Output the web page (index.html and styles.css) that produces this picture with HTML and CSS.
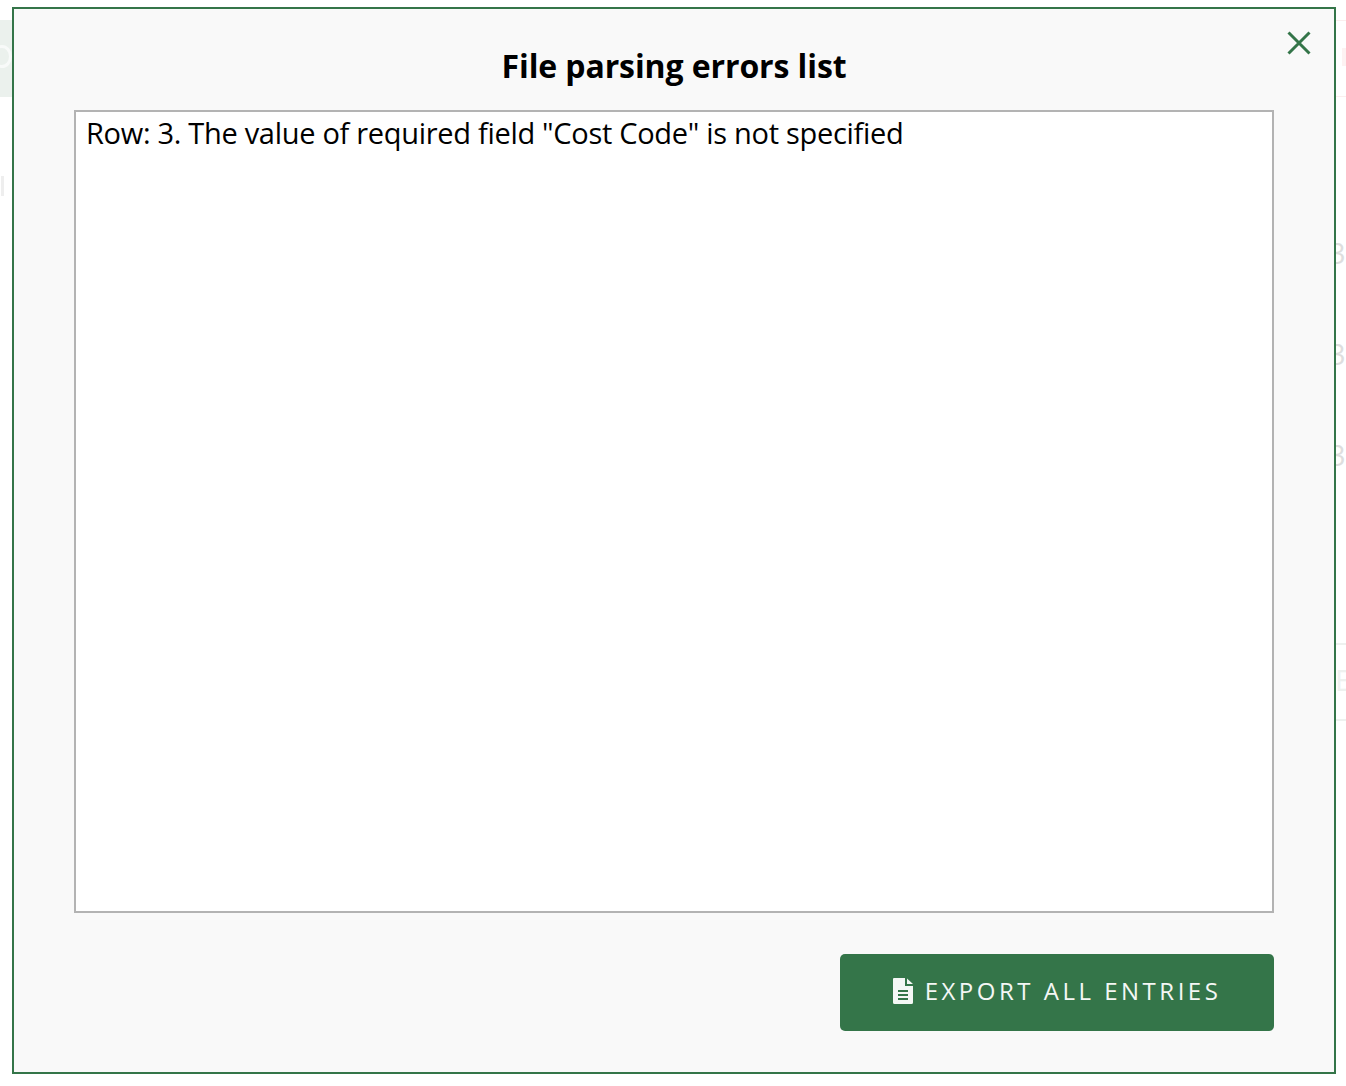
FILE: index.html
```html
<!DOCTYPE html>
<html lang="en">
<head>
<meta charset="utf-8">
<title>File parsing errors list</title>
<link rel="stylesheet" href="styles.css">
</head>
<body>
<div class="backdrop" aria-hidden="true">
  <div class="ghost-chip"></div>
  <div class="ghost-ring"></div>
  <div class="ghost-stem"></div>
  <div class="ghost-pink-line"></div>
  <div class="ghost-pink-bar"></div>
  <span class="ghost-num ghost-3a">3</span>
  <span class="ghost-num ghost-3b">3</span>
  <span class="ghost-num ghost-3c">3</span>
  <div class="ghost-line ghost-l1"></div>
  <span class="ghost-num ghost-e">E</span>
  <div class="ghost-line ghost-l2"></div>
</div>
<main class="modal">
  <button class="close" aria-label="Close">
    <svg width="24" height="24" viewBox="0 0 24 24"><path d="M1.5 1.500 22.500 22.500M22.500 1.500 1.500 22.500" fill="none" stroke="#347549" stroke-width="3"/></svg>
  </button>
  <h1 class="title">File parsing errors list</h1>
  <div class="errors">Row: 3. The value of required field "Cost Code" is not specified</div>
  <div class="actions">
    <button class="export">
      <svg class="file-icon" width="20" height="26" viewBox="0 0 20 26"><path d="M1 0H12V8H20V24.500A1.500 1.500 0 0 1 18.500 26H1.500A1.500 1.500 0 0 1 0 24.500V1A1 1 0 0 1 1 0ZM14 0.500 20 6H14ZM5 12V14H15V12ZM5 16V18H15V16ZM5 20V22H15V20Z" fill="#f4f7f5" fill-rule="evenodd"/></svg>
      <span class="export-label">EXPORT ALL ENTRIES</span>
    </button>
  </div>
</main>
</body>
</html>
```
FILE: styles.css
```css
* { box-sizing: border-box; }
html, body { margin: 0; height: 100%; }
body {
  background: #fff;
  overflow: hidden;
  padding: 7px 10px 12px 12px;
  font-family: "Open Sans", sans-serif;
}
.backdrop { position: absolute; inset: 0; overflow: hidden; }
.ghost-chip {
  position: absolute; left: 0; top: 20px; width: 14px; height: 77px;
  background: #ebf1ed;
}
.ghost-ring {
  position: absolute; left: -8px; top: 45px; width: 20px; height: 23px;
  border: 3px solid #f8faf9; border-radius: 50%;
}
.ghost-stem { position: absolute; left: 1px; top: 176px; width: 3px; height: 20px; background: #eeeeee; }
.ghost-num { position: absolute; color: #dedede; font-size: 29px; line-height: 30px; }
.ghost-3a { left: 1329px; top: 238px; }
.ghost-3b { left: 1329px; top: 339px; }
.ghost-3c { left: 1329px; top: 440px; }
.ghost-e { left: 1335px; top: 665px; color: #eef1ef; }
.ghost-pink-line { position: absolute; left: 1336px; right: 0; top: 20px; height: 1px; background: #fbeeee; box-shadow: 0 76px 0 #fbeeee; }
.ghost-pink-bar { position: absolute; left: 1342px; top: 48px; width: 4px; height: 18px; background: #fdf2f2; }
.ghost-line { position: absolute; left: 1336px; right: 0; height: 2px; background: #eef1ef; }
.ghost-l1 { top: 643px; }
.ghost-l2 { top: 719px; }
.modal {
  position: relative;
  height: 1067px;
  background: #f9f9f9;
  border: 2px solid #347549;
  padding: 0 60px;
  display: flex;
  flex-direction: column;
}
.close {
  position: absolute; top: 22px; right: 23px;
  width: 24px; height: 24px; padding: 0; border: 0; background: none; display: flex;
}
.title {
  margin: 0;
  height: 101px;
  padding-top: 37px;
  text-align: center;
  font-size: 32px;
  line-height: 40px;
  font-weight: 700;
  letter-spacing: -0.1px;
  color: #000;
}
.errors {
  height: 803px;
  background: #fff;
  border: 2px solid #b3b3b3;
  padding: 1px 10px;
  font-size: 29px;
  line-height: 40px;
  letter-spacing: -0.3px;
  color: #000;
}
.actions { display: flex; justify-content: flex-end; margin-top: 41px; }
.export {
  width: 434px; height: 77px;
  display: flex; align-items: center; justify-content: center; gap: 12px;
  padding: 0 0 0 3px;
  background: #347549; border: 0; border-radius: 5px;
  color: #f4f7f5;
  font-family: "Open Sans", sans-serif; font-size: 24px; letter-spacing: 3.5px;
}
.export-label { margin-top: -4px; }
.file-icon { margin-top: -3px; margin-left: -3px; }
```
